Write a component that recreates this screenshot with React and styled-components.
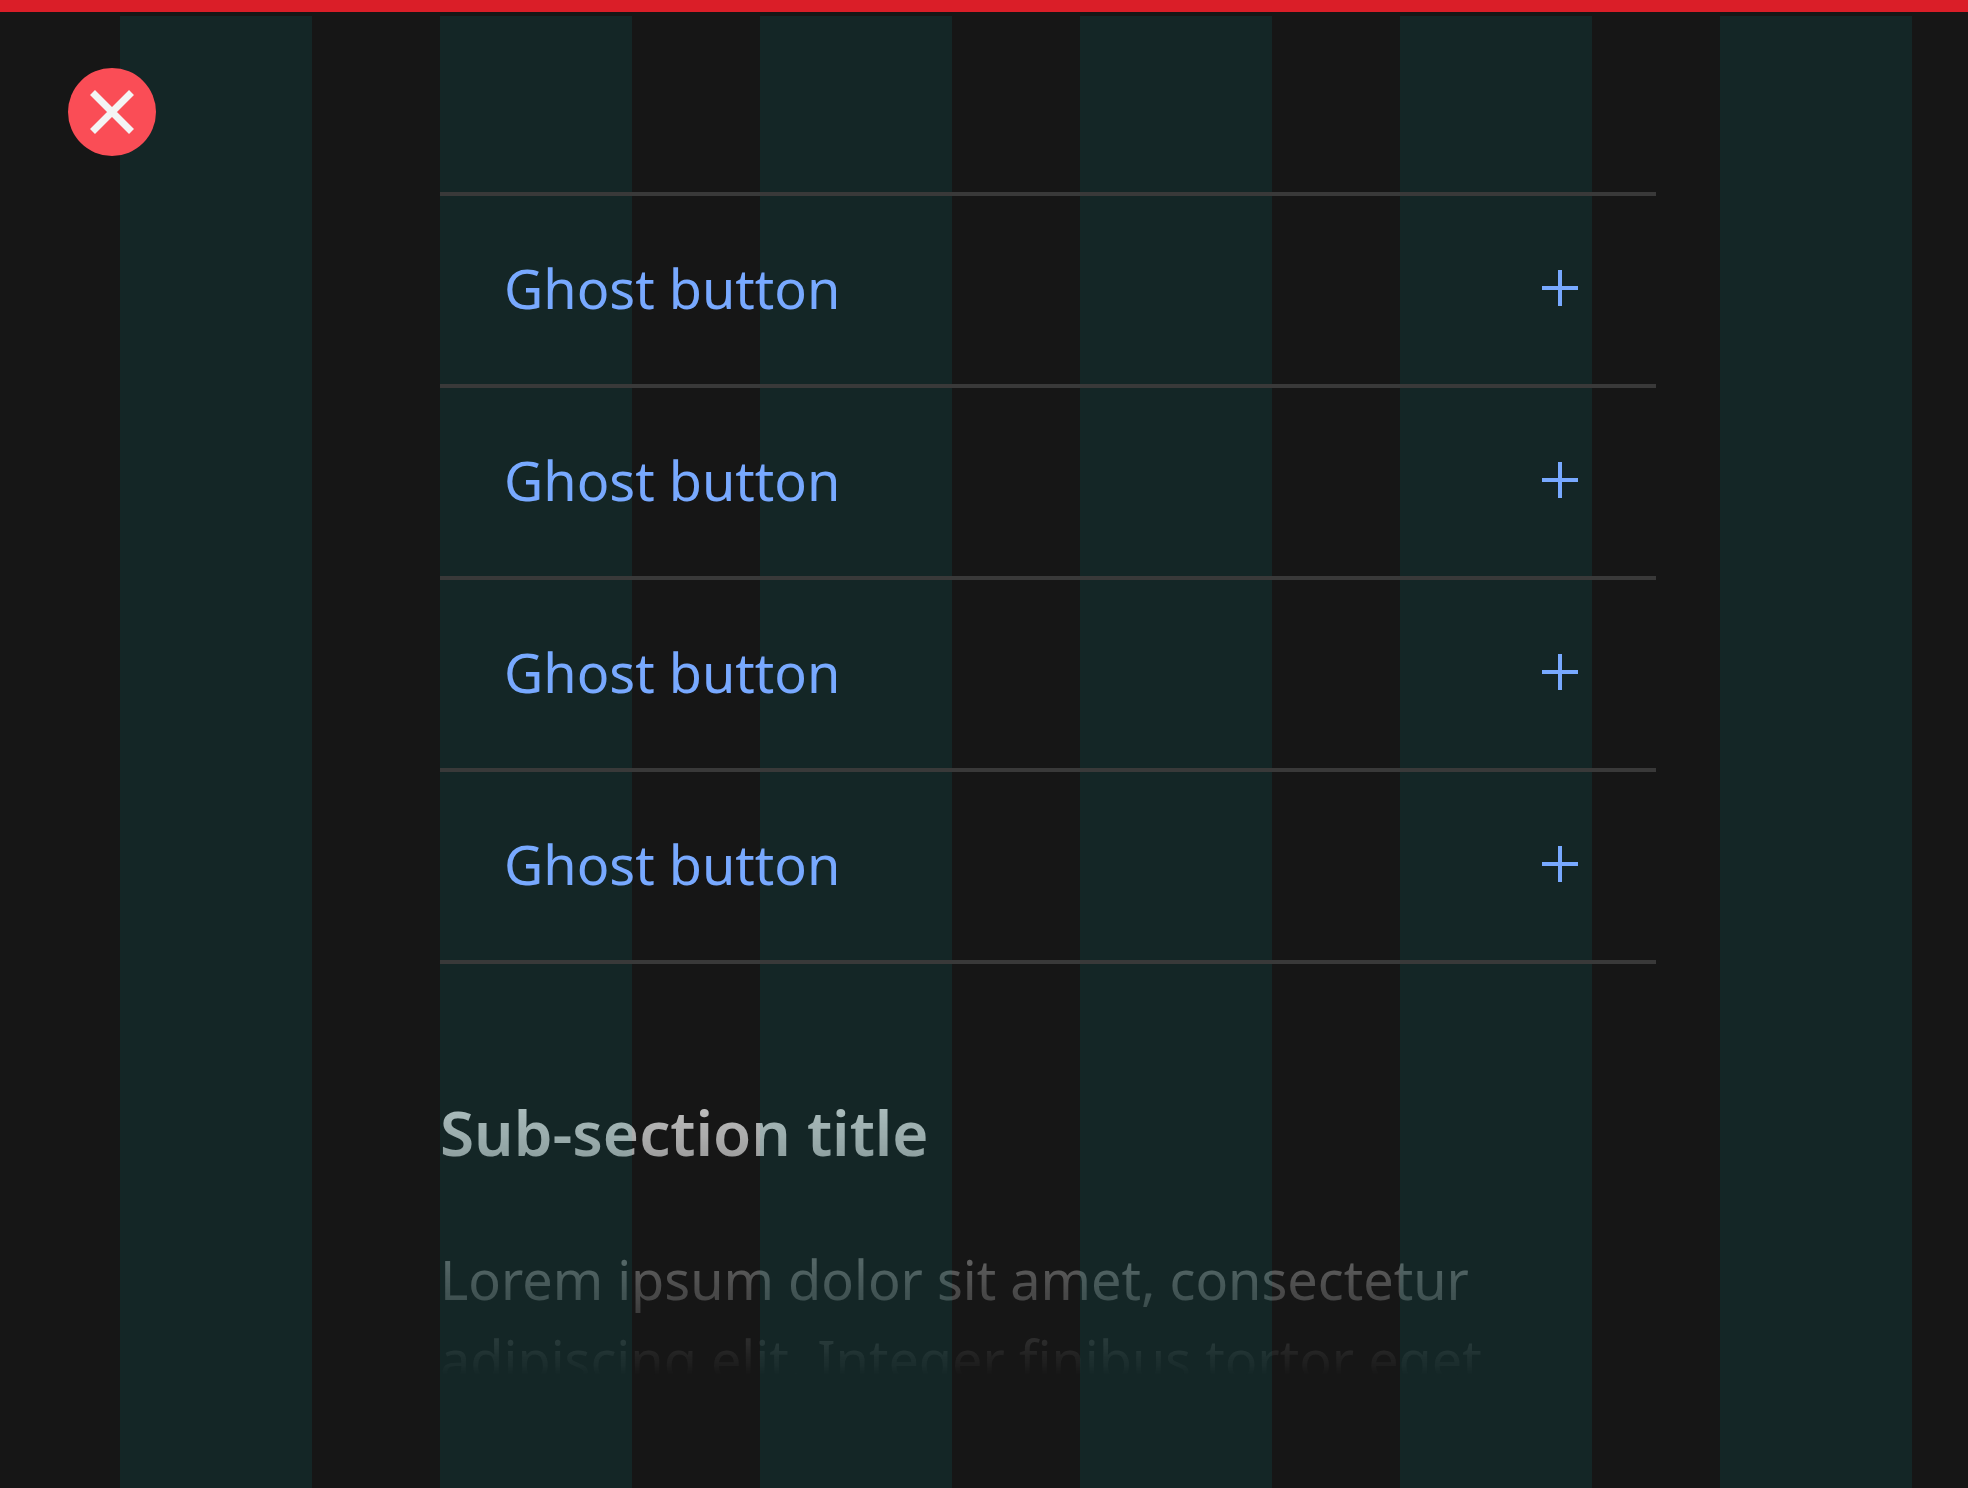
import React from "react";
import styled, { createGlobalStyle } from "styled-components";

const GlobalStyle = createGlobalStyle`
  body { margin: 0; background: #161616; }
  *, *::before, *::after { box-sizing: border-box; }
`;

const fontStack = '"Noto Sans", "Liberation Sans", sans-serif';

const Page = styled.main`
  position: relative;
  min-height: 100vh;
  overflow: hidden;
  border-top: 12px solid #da1e28;
  background: #161616;
  font-family: ${fontStack};
`;

const GridOverlay = styled.div`
  position: absolute;
  inset: 4px 0 0;
  z-index: 1;
  display: grid;
  grid-template-columns: repeat(6, 1fr);
  column-gap: 128px;
  padding: 0 56px 0 120px;
  pointer-events: none;
`;

const GridColumn = styled.div`
  background: rgba(8, 189, 186, 0.1);
`;

const Badge = styled.svg`
  position: absolute;
  z-index: 2;
  top: 56px;
  left: 68px;
  width: 88px;
  height: 88px;
`;

const Content = styled.div`
  padding: 180px 312px 80px 440px;
`;

const List = styled.ul`
  position: relative;
  z-index: 2;
  list-style: none;
  margin: 0;
  padding: 0;
  border-top: 4px solid #393939;
`;

const Item = styled.li`
  border-bottom: 4px solid #393939;
`;

const GhostButton = styled.button`
  display: flex;
  align-items: center;
  justify-content: space-between;
  width: 100%;
  height: 188px;
  padding: 0 64px 4px;
  border: 0;
  background: transparent;
  color: #78a9ff;
  font: 400 54px/72px ${fontStack};
  cursor: pointer;
`;

const PlusIcon = styled.svg`
  width: 64px;
  height: 64px;
`;

const Section = styled.section`
  padding-top: 128px;
  mask-image: linear-gradient(to bottom, #000 56px, transparent 412px);
`;

const Title = styled.h2`
  margin: 0;
  color: #f4f4f4;
  font-size: 62px;
  line-height: 80px;
  font-weight: 600;
`;

const Copy = styled.p`
  margin: 67px 0 0;
  color: #f4f4f4;
  font-size: 54px;
  line-height: 80px;
`;

const columns = Array.from({ length: 6 }, (_, i) => i);
const actions = ["Ghost button", "Ghost button", "Ghost button", "Ghost button"];

export default function App() {
  return (
    <>
      <GlobalStyle />
      <Page>
        <GridOverlay aria-hidden="true">
          {columns.map((c) => (
            <GridColumn key={c} />
          ))}
        </GridOverlay>
        <Content>
          <List>
            {actions.map((label, i) => (
              <Item key={i}>
                <GhostButton type="button">
                  {label}
                  <PlusIcon viewBox="0 0 64 64" aria-hidden="true">
                    <path d="M34 30V14h-4v16H14v4h16v16h4V34h16v-4z" fill="currentColor" />
                  </PlusIcon>
                </GhostButton>
              </Item>
            ))}
          </List>
          <Section>
            <Title>Sub-section title</Title>
            <Copy>Lorem ipsum dolor sit amet, consectetur adipiscing elit. Integer finibus tortor eget</Copy>
          </Section>
        </Content>
        <Badge viewBox="0 0 88 88" role="img" aria-label="Incorrect">
          <circle cx="44" cy="44" r="44" fill="#fa4d56" />
          <path d="M24.5 24.5 63.5 63.5M63.5 24.5 24.5 63.5" stroke="#f4f4f4" strokeWidth="7" />
        </Badge>
      </Page>
    </>
  );
}
